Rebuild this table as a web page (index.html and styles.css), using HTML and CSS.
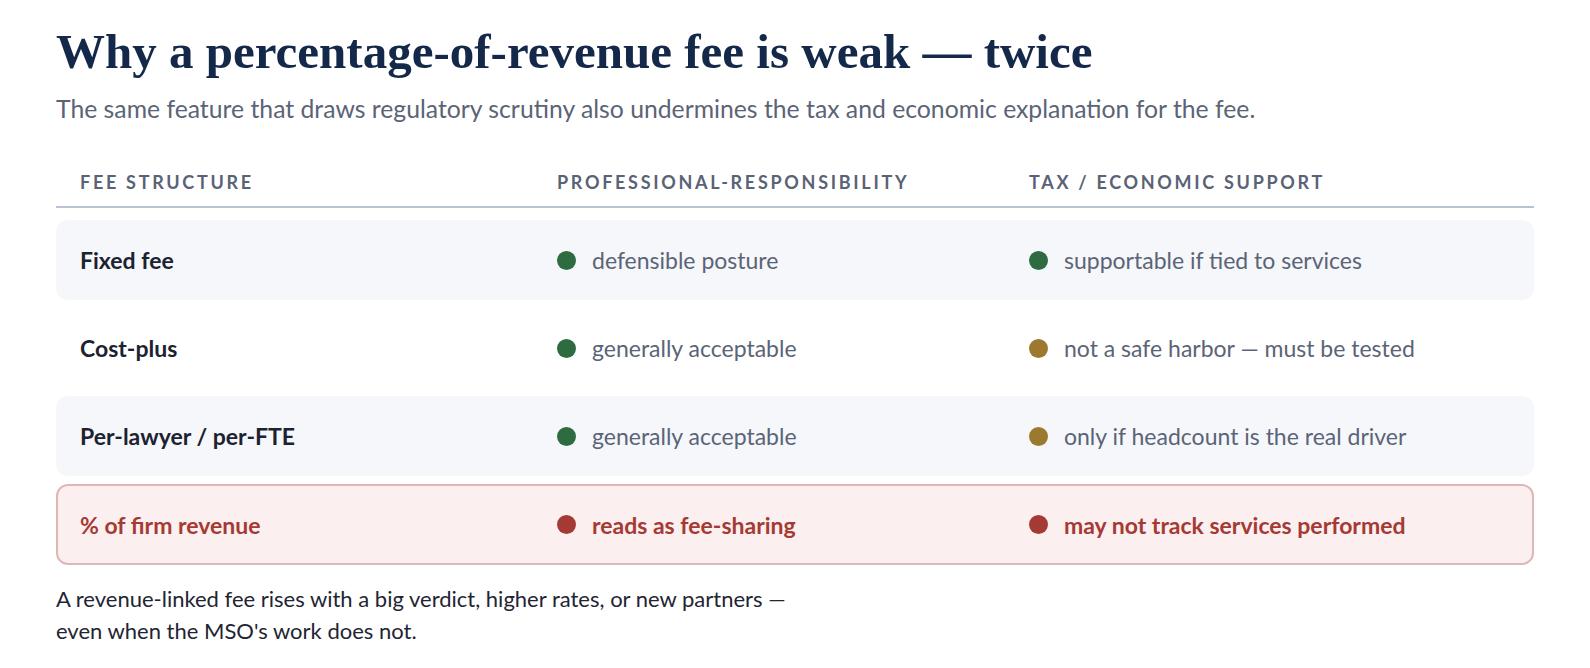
FILE: index.html
```html
<!DOCTYPE html>
<html lang="en">
<head>
<meta charset="utf-8">
<title>Why a percentage-of-revenue fee is weak — twice</title>
<link rel="stylesheet" href="styles.css">
</head>
<body>
<main class="page">
  <h1 class="title">Why a percentage-of-revenue fee is weak — twice</h1>
  <p class="subtitle">The same feature that draws regulatory scrutiny also undermines the tax and economic explanation for the fee.</p>

  <div class="table">
    <div class="row head">
      <div class="cell">Fee structure</div>
      <div class="cell">Professional-responsibility</div>
      <div class="cell">Tax / economic support</div>
    </div>
    <div class="row shaded">
      <div class="cell name">Fixed fee</div>
      <div class="cell status"><span class="dot green"></span>defensible posture</div>
      <div class="cell status"><span class="dot green"></span>supportable if tied to services</div>
    </div>
    <div class="row">
      <div class="cell name">Cost-plus</div>
      <div class="cell status"><span class="dot green"></span>generally acceptable</div>
      <div class="cell status"><span class="dot amber"></span>not a safe harbor — must be tested</div>
    </div>
    <div class="row shaded">
      <div class="cell name">Per-lawyer / per-FTE</div>
      <div class="cell status"><span class="dot green"></span>generally acceptable</div>
      <div class="cell status"><span class="dot amber"></span>only if headcount is the real driver</div>
    </div>
    <div class="row alert">
      <div class="cell name">% of firm revenue</div>
      <div class="cell status"><span class="dot red"></span>reads as fee-sharing</div>
      <div class="cell status"><span class="dot red"></span>may not track services performed</div>
    </div>
  </div>

  <p class="note">A revenue-linked fee rises with a big verdict, higher rates, or new partners — even when the MSO's work does not.</p>
</main>
</body>
</html>
```

FILE: styles.css
```css
* { box-sizing: border-box; }

body {
  margin: 0;
  background: #ffffff;
  font-family: "Lato", "Liberation Sans", sans-serif;
}

.page {
  padding: 22px 56px 0;
}

.title {
  margin: 0;
  font-family: "Liberation Serif", "DejaVu Serif", serif;
  font-weight: 700;
  font-size: 49px;
  line-height: 60px;
  color: #14284a;
}

.subtitle {
  margin: 12px 0 0;
  font-size: 24.75px;
  line-height: 30px;
  color: #5b6477;
}

.table {
  margin-top: 32px;
  display: flex;
  flex-direction: column;
  gap: 8px;
}

.row {
  display: grid;
  grid-template-columns: 477px 472px 1fr;
  align-items: center;
  min-height: 80px;
  border-radius: 12px;
  border: 2px solid transparent;
}

.row .cell {
  padding: 0 22px;
}

.row.head {
  min-height: 0;
  height: 52px;
  border: 0;
  border-bottom: 2px solid #b8c2d3;
  border-radius: 0;
  align-items: start;
  padding-top: 15px;
  margin-bottom: 4px;
}

.row.head .cell {
  padding: 0 24px;
  font-size: 18px;
  font-weight: 700;
  letter-spacing: 2.7px;
  text-transform: uppercase;
  color: #5a6275;
}

.row.shaded {
  background: #f5f7fb;
}

.name {
  font-size: 23px;
  font-weight: 700;
  color: #1c2230;
}

.status {
  display: flex;
  align-items: center;
  gap: 16px;
  font-size: 23px;
  color: #5b6477;
}

.dot {
  flex: none;
  width: 19px;
  height: 19px;
  border-radius: 50%;
}

.dot.green { background: #2e6b40; }
.dot.amber { background: #9b7a2f; }
.dot.red { background: #a53a34; }

.row.alert {
  min-height: 81px;
  background: #fbefef;
  border-color: #dfb7b4;
}

.row.alert .name,
.row.alert .status {
  color: #a53a34;
  font-weight: 700;
}

.note {
  margin: 18px 0 0;
  max-width: 760px;
  font-size: 22px;
  line-height: 32px;
  color: #1f2533;
}
```
